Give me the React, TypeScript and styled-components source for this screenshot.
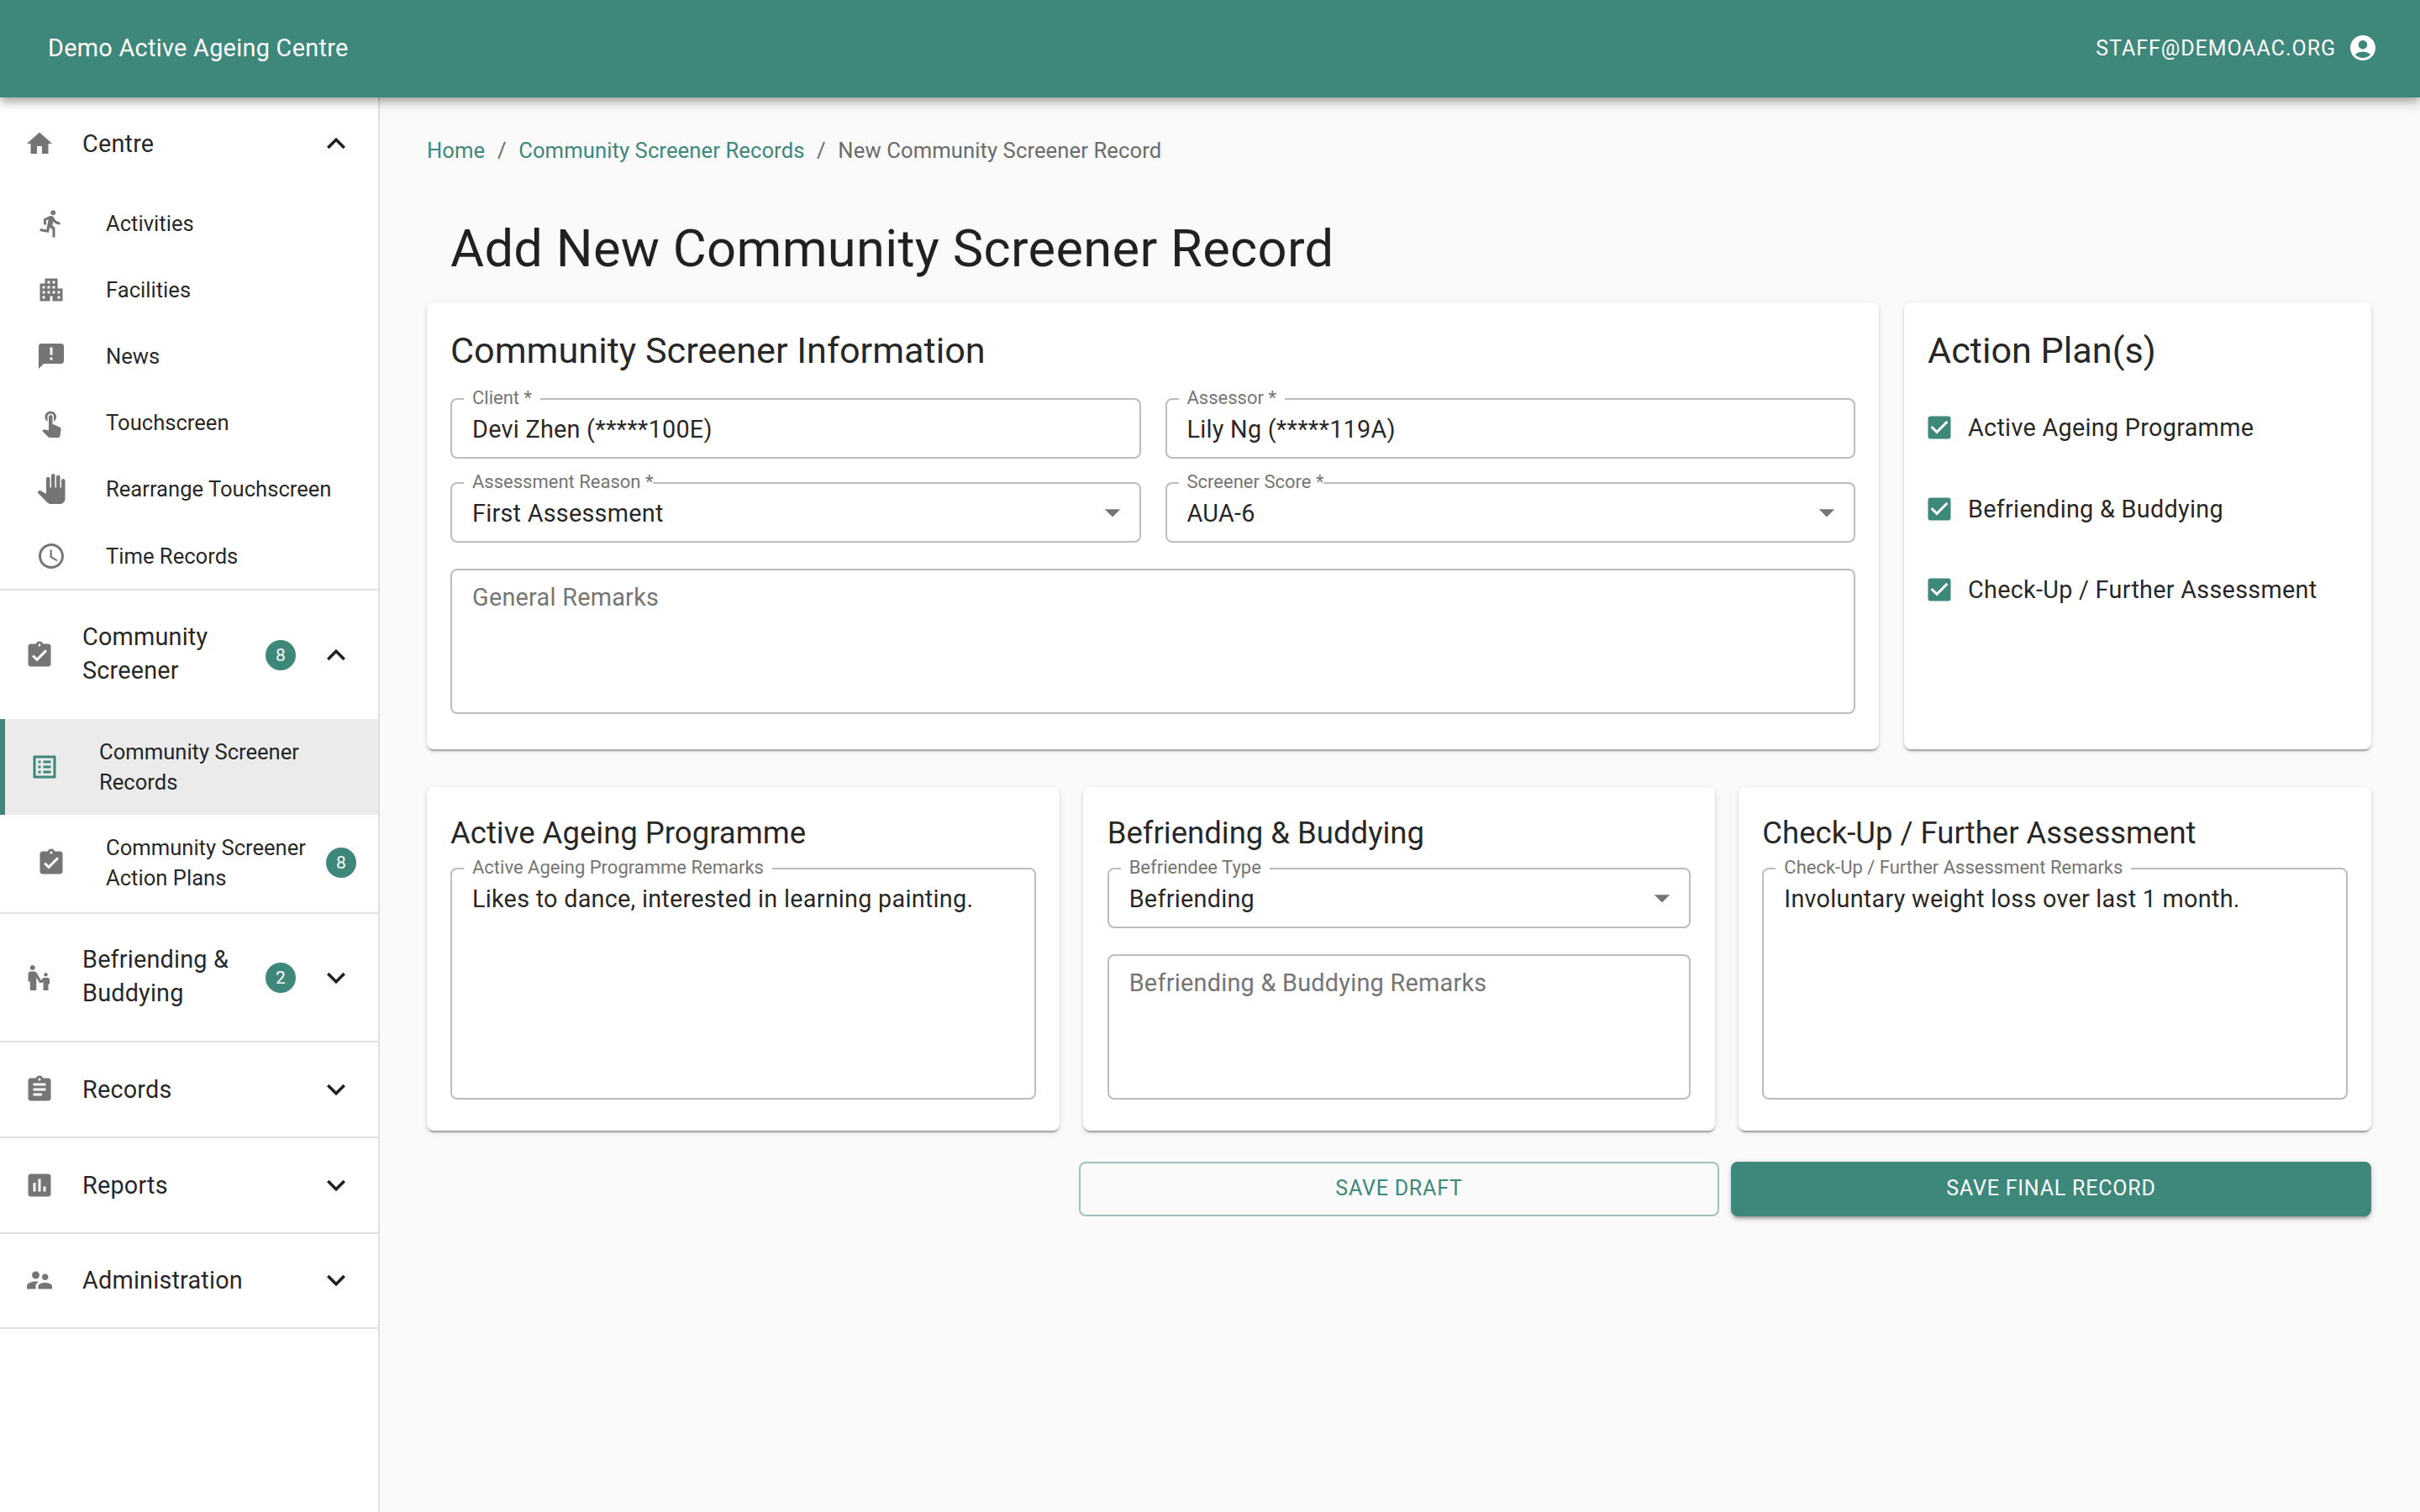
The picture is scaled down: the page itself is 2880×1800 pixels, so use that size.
import React from "react";
import styled, { createGlobalStyle } from "styled-components";
import {
  MdHome, MdDirectionsRun, MdApartment, MdAnnouncement, MdTouchApp, MdPanTool, MdAccessTime,
  MdAssignmentTurnedIn, MdListAlt, MdEscalatorWarning, MdAssignment, MdAssessment, MdSupervisorAccount,
  MdExpandLess, MdExpandMore, MdAccountCircle, MdCheckBox, MdArrowDropDown,
} from "react-icons/md";

const TEAL = "#3d877b";

const Global = createGlobalStyle`
  html, body { margin: 0; padding: 0; background: #fafafa; }
  body { font-family: Roboto, "Liberation Sans", sans-serif; color: rgba(0,0,0,.87); }
  * { box-sizing: border-box; }
`;

const Page = styled.div`
  width: 2880px; height: 1800px; overflow: hidden; display: flex; flex-direction: column; background: #fafafa;
`;
const TopBar = styled.header`
  position: relative; z-index: 2; flex: none; height: 116px; padding: 0 50px 0 57px;
  display: flex; align-items: center; justify-content: space-between; background: ${TEAL}; color: #fff;
  box-shadow: 0 4px 8px -2px rgba(0,0,0,.2), 0 8px 10px 0 rgba(0,0,0,.14), 0 2px 20px 0 rgba(0,0,0,.12);
`;
const Brand = styled.div`font-size: 28.8px; letter-spacing: .3px; margin-top: -2px;`;
const Account = styled.div`display: flex; align-items: center; gap: 14px; font-size: 25px; letter-spacing: .95px; margin-top: -2px;`;
const Body = styled.div`flex: 1; display: flex; min-height: 0;`;

const Sidebar = styled.nav`
  flex: none; width: 452px; background: #fff; border-right: 2px solid #e0e0e0;
`;
const Group = styled.div`border-bottom: 2px solid #e0e0e0;`;
const GroupRow = styled.div<{ $h: number }>`
  display: flex; align-items: center; height: ${(p) => p.$h}px; padding: 0 28px 0 29px;
`;
const GroupIcon = styled.span`
  display: flex; width: 69px; flex: none; font-size: 36px; color: #757575;
`;
const GroupLabel = styled.div<{ $lift?: boolean }>`
  flex: none; width: 218px; margin-bottom: ${(p) => (p.$lift ? 3 : 0)}px; font-size: 28.8px; line-height: 40px; letter-spacing: .2px;
`;
const Badge = styled.span<{ $push?: boolean }>`
  flex: none; width: 36px; height: 36px; border-radius: 50%; background: ${TEAL}; color: #fff;
  display: flex; align-items: center; justify-content: center; font-size: 21px;
  ${(p) => (p.$push ? "margin-left: auto;" : "")}
`;
const Chevron = styled.span`
  margin-left: auto; display: flex; font-size: 44px; color: rgba(0,0,0,.87);
`;
const SubList = styled.div<{ $pb?: number }>`display: flex; flex-direction: column; padding-bottom: ${(p) => p.$pb ?? 0}px;`;
const SubRow = styled.div<{ $h: number; $selected?: boolean }>`
  display: flex; align-items: center; height: ${(p) => p.$h}px;
  padding: 0 26px 0 ${(p) => (p.$selected ? 29 : 43)}px;
  background: ${(p) => (p.$selected ? "#ebebeb" : "transparent")};
  border-left: ${(p) => (p.$selected ? `6px solid ${TEAL}` : "none")};
`;
const SubIcon = styled.span<{ $selected?: boolean }>`
  display: flex; width: 83px; flex: none; font-size: 36px; color: ${(p) => (p.$selected ? TEAL : "#757575")};
`;
const SubLabel = styled.div`
  flex: 0 1 280px; font-size: 25.6px; line-height: 36px; letter-spacing: 0;
`;

const Main = styled.main`flex: 1; min-width: 0; padding: 0 58px 0 56px;`;
const Crumbs = styled.div`
  display: flex; align-items: center; gap: 14.6px; height: 28px; margin-top: 49px; font-size: 25.6px; letter-spacing: .1px; color: #6b6b6b;
`;
const CrumbLink = styled.span`color: ${TEAL};`;
const Title = styled.h1`
  margin: 63px 0 0 28px; font-weight: 400; font-size: 61.44px; line-height: 80px; letter-spacing: .3px;
`;
const TopGrid = styled.div`
  display: grid; grid-template-columns: 1728px 556px; gap: 30px; margin-top: 24px;
`;
const Card = styled.section<{ $h: number; $inset?: number }>`
  height: ${(p) => p.$h}px; padding: 28px ${(p) => p.$inset ?? 28}px; background: #fff; border-radius: 8px;
  box-shadow: 0 4px 2px -2px rgba(0,0,0,.2), 0 2px 2px 0 rgba(0,0,0,.14), 0 2px 6px 0 rgba(0,0,0,.12);
`;
const CardTitle = styled.h2<{ $small?: boolean }>`
  margin: 0; font-weight: 400; font-size: ${(p) => (p.$small ? 36.5 : 43.2)}px;
  line-height: ${(p) => (p.$small ? 54 : 60)}px;
`;
const FieldGrid = styled.div`display: grid; grid-template-columns: 1fr 1fr; gap: 28px 29px; margin-top: 26px;`;
const Outlined = styled.div<{ $h: number; $full?: boolean; $mt?: number }>`
  position: relative; height: ${(p) => p.$h}px; border: 2px solid #bdbdbd; border-radius: 8px;
  padding: 0 24px; font-size: 28.8px; letter-spacing: .26px; line-height: 71px;
  ${(p) => (p.$full ? "grid-column: 1 / -1;" : "")}
  margin-top: ${(p) => p.$mt ?? 0}px;
`;
const Notch = styled.label<{ $tight?: boolean }>`
  position: absolute; top: -15px; left: 14px; padding: 0 ${(p) => (p.$tight ? 0 : 10)}px 0 10px; background: #fff;
  font-size: 22px; line-height: 26px; letter-spacing: 0; color: #757575;
`;
const Placeholder = styled.span`display: block; line-height: 65px; color: #757575;`;
const Arrow = styled.span`
  position: absolute; top: 12px; right: 10px; display: flex; font-size: 44px; color: #757575;
`;
const Check = styled.div`
  display: flex; align-items: center; gap: 16px; height: 96.5px; font-size: 28.8px; letter-spacing: .28px;
  svg { flex: none; color: ${TEAL}; }
`;
const CheckList = styled.div`margin: 0 0 0 -4px; padding-top: 13px;`;
const ThreeGrid = styled.div`display: grid; grid-template-columns: repeat(3, 1fr); gap: 28px; margin-top: 45px;`;
const Actions = styled.div`display: flex; justify-content: flex-end; gap: 14px; margin-top: 37px;`;
const ActionButton = styled.button<{ $primary?: boolean }>`
  width: 762px; height: 65px; padding: 0 0 2px; border-radius: 8px; font-family: inherit; font-size: 25px; letter-spacing: .8px; text-transform: uppercase;
  background: ${(p) => (p.$primary ? TEAL : "transparent")}; color: ${(p) => (p.$primary ? "#fff" : TEAL)};
  border: ${(p) => (p.$primary ? "none" : `2px solid #9dc3bc`)};
  box-shadow: ${(p) => (p.$primary ? "0 6px 2px -4px rgba(0,0,0,.2), 0 4px 4px 0 rgba(0,0,0,.14), 0 2px 10px 0 rgba(0,0,0,.12)" : "none")};
`;

const centre = [
  { icon: MdDirectionsRun, label: "Activities" },
  { icon: MdApartment, label: "Facilities" },
  { icon: MdAnnouncement, label: "News" },
  { icon: MdTouchApp, label: "Touchscreen" },
  { icon: MdPanTool, label: "Rearrange Touchscreen" },
  { icon: MdAccessTime, label: "Time Records" },
];

export default function App() {
  return (
    <Page>
      <Global />
      <TopBar>
        <Brand>Demo Active Ageing Centre</Brand>
        <Account>STAFF@DEMOAAC.ORG <MdAccountCircle size={36} /></Account>
      </TopBar>
      <Body>
        <Sidebar>
          <Group>
            <GroupRow $h={110}>
              <GroupIcon><MdHome /></GroupIcon>
              <GroupLabel>Centre</GroupLabel>
              <Chevron><MdExpandLess /></Chevron>
            </GroupRow>
            <SubList>
              {centre.map((c) => (
                <SubRow key={c.label} $h={79.2}>
                  <SubIcon><c.icon /></SubIcon>
                  <SubLabel>{c.label}</SubLabel>
                </SubRow>
              ))}
            </SubList>
          </Group>
          <Group>
            <GroupRow $h={153}>
              <GroupIcon><MdAssignmentTurnedIn /></GroupIcon>
              <GroupLabel $lift>Community Screener</GroupLabel>
              <Badge>8</Badge>
              <Chevron><MdExpandLess /></Chevron>
            </GroupRow>
            <SubList $pb={2}>
              <SubRow $h={114} $selected>
                <SubIcon $selected><MdListAlt /></SubIcon>
                <SubLabel>Community Screener Records</SubLabel>
              </SubRow>
              <SubRow $h={114}>
                <SubIcon><MdAssignmentTurnedIn /></SubIcon>
                <SubLabel>Community Screener Action Plans</SubLabel>
                <Badge $push>8</Badge>
              </SubRow>
            </SubList>
          </Group>
          <Group>
            <GroupRow $h={151}>
              <GroupIcon><MdEscalatorWarning /></GroupIcon>
              <GroupLabel $lift>Befriending &amp; Buddying</GroupLabel>
              <Badge>2</Badge>
              <Chevron><MdExpandMore /></Chevron>
            </GroupRow>
          </Group>
          {[
            { icon: MdAssignment, label: "Records" },
            { icon: MdAssessment, label: "Reports" },
            { icon: MdSupervisorAccount, label: "Administration" },
          ].map((g) => (
            <Group key={g.label}>
              <GroupRow $h={111.7}>
                <GroupIcon><g.icon /></GroupIcon>
                <GroupLabel>{g.label}</GroupLabel>
                <Chevron><MdExpandMore /></Chevron>
              </GroupRow>
            </Group>
          ))}
        </Sidebar>
        <Main>
          <Crumbs>
            <CrumbLink>Home</CrumbLink><span>/</span>
            <CrumbLink>Community Screener Records</CrumbLink><span>/</span>
            <span>New Community Screener Record</span>
          </Crumbs>
          <Title>Add New Community Screener Record</Title>
          <TopGrid>
            <Card $h={532}>
              <CardTitle>Community Screener Information</CardTitle>
              <FieldGrid>
                <Outlined $h={72}><Notch>Client *</Notch>Devi Zhen (*****100E)</Outlined>
                <Outlined $h={72}><Notch>Assessor *</Notch>Lily Ng (*****119A)</Outlined>
                <Outlined $h={72}><Notch $tight>Assessment Reason *</Notch>First Assessment<Arrow><MdArrowDropDown /></Arrow></Outlined>
                <Outlined $h={72}><Notch $tight>Screener Score *</Notch>AUA-6<Arrow><MdArrowDropDown /></Arrow></Outlined>
                <Outlined $h={173} $full $mt={3}><Placeholder>General Remarks</Placeholder></Outlined>
              </FieldGrid>
            </Card>
            <Card $h={532}>
              <CardTitle>Action Plan(s)</CardTitle>
              <CheckList>
                <Check><MdCheckBox size={36} />Active Ageing Programme</Check>
                <Check><MdCheckBox size={36} />Befriending &amp; Buddying</Check>
                <Check><MdCheckBox size={36} />Check-Up / Further Assessment</Check>
              </CheckList>
            </Card>
          </TopGrid>
          <ThreeGrid>
            <Card $h={409}>
              <CardTitle $small>Active Ageing Programme</CardTitle>
              <Outlined $h={276} $mt={14}><Notch>Active Ageing Programme Remarks</Notch>Likes to dance, interested in learning painting.</Outlined>
            </Card>
            <Card $h={409} $inset={29}>
              <CardTitle $small>Befriending &amp; Buddying</CardTitle>
              <Outlined $h={72} $mt={14}><Notch>Befriendee Type</Notch>Befriending<Arrow><MdArrowDropDown /></Arrow></Outlined>
              <Outlined $h={173} $mt={31}><Placeholder>Befriending &amp; Buddying Remarks</Placeholder></Outlined>
            </Card>
            <Card $h={409}>
              <CardTitle $small>Check-Up / Further Assessment</CardTitle>
              <Outlined $h={276} $mt={14}><Notch>Check-Up / Further Assessment Remarks</Notch>Involuntary weight loss over last 1 month.</Outlined>
            </Card>
          </ThreeGrid>
          <Actions>
            <ActionButton>Save Draft</ActionButton>
            <ActionButton $primary>Save Final Record</ActionButton>
          </Actions>
        </Main>
      </Body>
    </Page>
  );
}
